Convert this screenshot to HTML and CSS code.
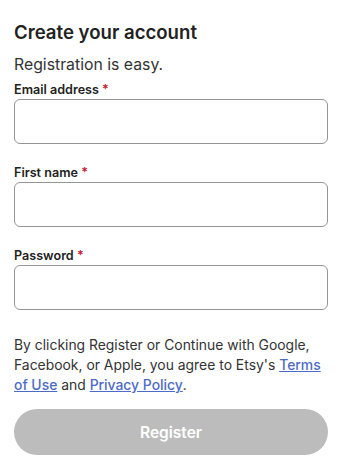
FILE: index.html
```html
<!DOCTYPE html>
<html>
<head>
<meta charset="utf-8">
<link rel="stylesheet" href="styles.css">
</head>
<body>
<div class="page">
  <h1 class="title">Create your account</h1>
  <p class="subtitle">Registration is easy.</p>
  <div class="field">
    <label class="label">Email address <span class="req">*</span></label>
    <div class="input"></div>
  </div>
  <div class="field">
    <label class="label">First name <span class="req">*</span></label>
    <div class="input"></div>
  </div>
  <div class="field">
    <label class="label">Password <span class="req">*</span></label>
    <div class="input"></div>
  </div>
  <p class="legal">By clicking Register or Continue with Google, Facebook, or Apple, you agree to Etsy's <a class="link">Terms of Use</a> and <a class="link">Privacy Policy</a>.</p>
  <div class="button">Register</div>
</div>
</body>
</html>
```
FILE: styles.css
```css
html, body { margin: 0; padding: 0; background: #fff; }
body { font-family: Inter, "Noto Sans", sans-serif; color: #222; }
.page { padding: 20px 14px 0 14px; display: flex; flex-direction: column; }
.title { margin: 0; font-size: 18.6px; font-weight: 600; line-height: 24px; color: #222; }
.subtitle { margin: 10px 0 0 0; font-size: 15.8px; line-height: 22px; color: #333; }
.field { display: flex; flex-direction: column; margin-top: 6px; }
.field + .field { margin-top: 21px; }
.label { font-size: 12.6px; font-weight: 600; line-height: 16px; color: #222; }
.req { color: #c8102e; }
.input { box-sizing: border-box; margin-top: 1px; height: 45px; border: 1px solid #959595; border-radius: 6px; background: #fff; }
.legal { margin: 25px 0 0 0; font-size: 13.9px; line-height: 20px; color: #333; }
.link { color: #4d6bc6; text-decoration: underline; font-weight: 500; }
.button { margin-top: 14px; height: 46px; border-radius: 23px; background: #bcbcbc; color: #fff; font-size: 15.5px; font-weight: 600; display: flex; align-items: center; justify-content: center; }
```
